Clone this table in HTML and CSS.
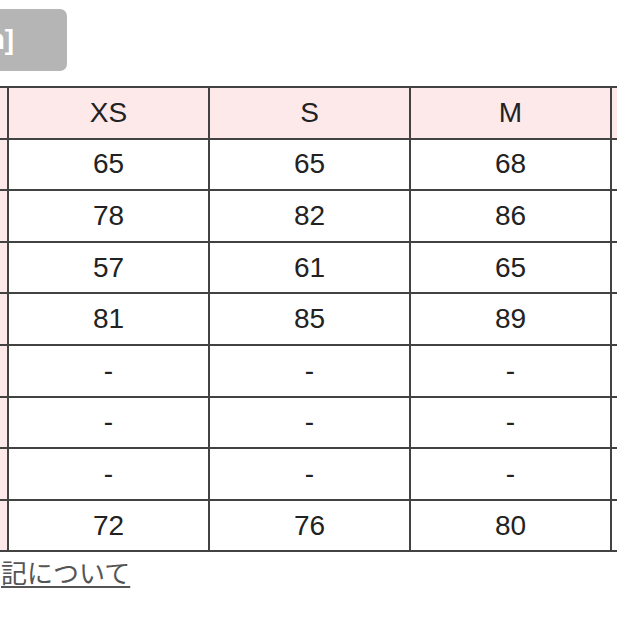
FILE: index.html
```html
<!DOCTYPE html>
<html lang="ja">
<head>
<meta charset="utf-8">
<link rel="stylesheet" href="styles.css">
</head>
<body>
<div class="page">
  <div class="unit-btn"><span class="unit-text">[cm]</span></div>
  <div class="size-table">
    <div class="cell head side"></div><div class="cell head">XS</div><div class="cell head">S</div><div class="cell head">M</div><div class="cell head"></div>
    <div class="cell side"></div><div class="cell">65</div><div class="cell">65</div><div class="cell">68</div><div class="cell"></div>
    <div class="cell side"></div><div class="cell">78</div><div class="cell">82</div><div class="cell">86</div><div class="cell"></div>
    <div class="cell side"></div><div class="cell">57</div><div class="cell">61</div><div class="cell">65</div><div class="cell"></div>
    <div class="cell side"></div><div class="cell">81</div><div class="cell">85</div><div class="cell">89</div><div class="cell"></div>
    <div class="cell side"></div><div class="cell">-</div><div class="cell">-</div><div class="cell">-</div><div class="cell"></div>
    <div class="cell side"></div><div class="cell">-</div><div class="cell">-</div><div class="cell">-</div><div class="cell"></div>
    <div class="cell side"></div><div class="cell">-</div><div class="cell">-</div><div class="cell">-</div><div class="cell"></div>
    <div class="cell side"></div><div class="cell">72</div><div class="cell">76</div><div class="cell">80</div><div class="cell"></div>
  </div>
  <a class="note-link" href="#">記について</a>
</div>
</body>
</html>
```
FILE: styles.css
```css
html, body {
  margin: 0;
  padding: 0;
  background: #ffffff;
}
.page {
  width: 617px;
  height: 617px;
  overflow: hidden;
  font-family: "Liberation Sans", Arial, "Noto Sans CJK JP", sans-serif;
}
.unit-btn {
  margin-top: 9px;
  width: 67px;
  height: 62px;
  box-sizing: border-box;
  background: #b5b5b5;
  border-radius: 0 7px 7px 0;
  display: flex;
  align-items: center;
  overflow: hidden;
}
.unit-text {
  color: #ffffff;
  font-size: 28px;
  font-weight: bold;
  margin-left: -45px;
  white-space: nowrap;
}
.size-table {
  margin-top: 15px;
  margin-left: -194px;
  display: grid;
  grid-template-columns: 199px 199px 199px 199px 199px;
  grid-auto-rows: 49.6px;
  gap: 2px;
  padding: 2px;
  width: max-content;
  background: #424242;
}
.cell {
  background: #ffffff;
  color: #222222;
  font-size: 28px;
  display: flex;
  align-items: center;
  justify-content: center;
}
.head, .side {
  background: #fde9ea;
}
.note-link {
  display: inline-block;
  margin-top: 3px;
  margin-left: 1px;
  font-family: "Noto Sans CJK JP", sans-serif;
  font-size: 26px;
  line-height: 34px;
  color: #555555;
  text-decoration: underline;
  text-underline-offset: 3px;
  text-decoration-thickness: 2px;
}
```
